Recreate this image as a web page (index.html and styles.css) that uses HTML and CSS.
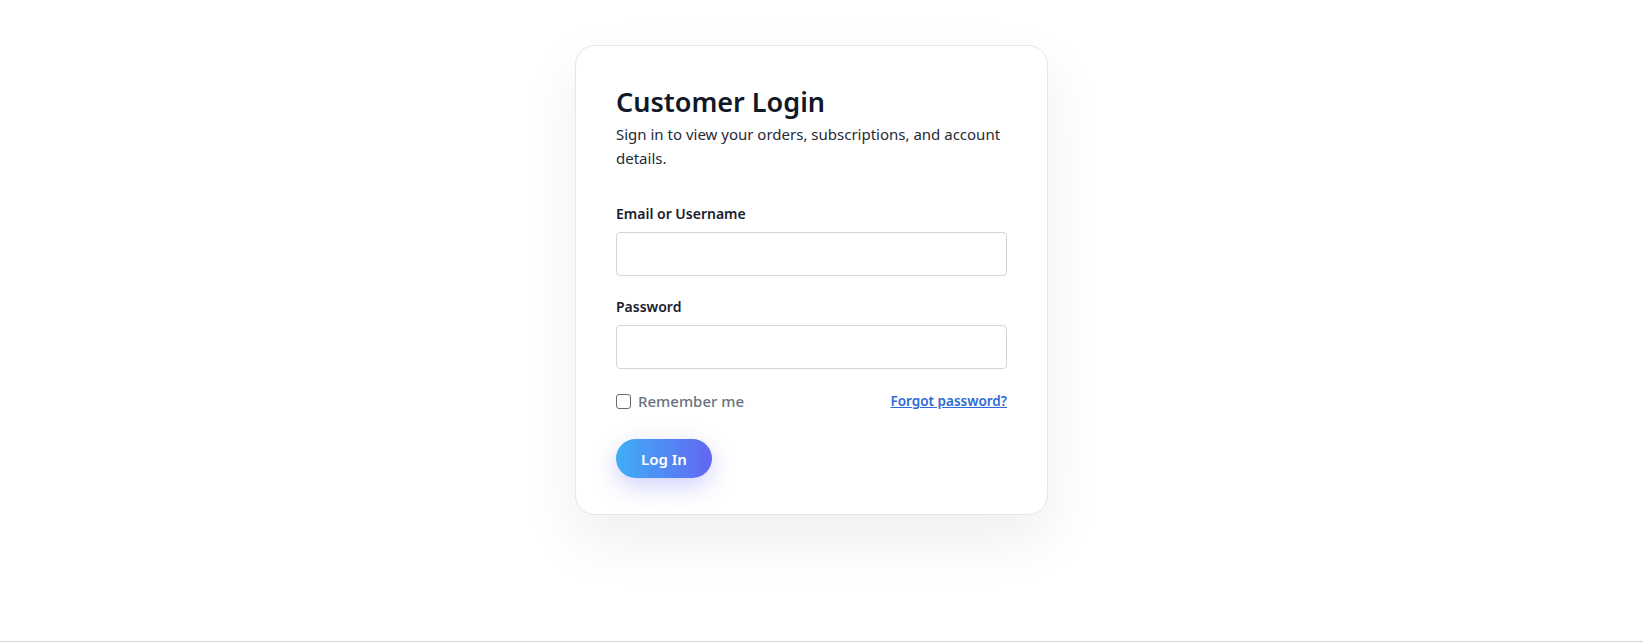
FILE: index.html
```html
<!DOCTYPE html>
<html lang="en">

<head>
  <meta charset="UTF-8">
  <meta name="viewport" content="width=device-width, initial-scale=1.0">
  <title>Customer Login</title>
  <link rel="stylesheet" href="styles.css">
</head>

<body>
  <div class="page">
    <div class="card">
      <h1 class="title">Customer Login</h1>
      <p class="subtitle">Sign in to view your orders, subscriptions, and account details.</p>
      <form class="form">
        <div class="field">
          <label class="label" for="user">Email or Username</label>
          <input class="input" id="user" type="text" />
        </div>
        <div class="field">
          <label class="label" for="pass">Password</label>
          <input class="input" id="pass" type="password" />
        </div>
        <div class="row">
          <label class="remember"><span class="check"></span>Remember me</label>
          <a class="forgot" href="#">Forgot password?</a>
        </div>
        <button class="btn" type="button">Log In</button>
      </form>
    </div>
  </div>
</body>

</html>
```

FILE: styles.css
```css
body {
  margin: 0;
  background: #fff;
  font-family: "Noto Sans", "Open Sans", sans-serif;
  color: #111827;
}

.page {
  box-sizing: border-box;
  height: 642px;
  border-bottom: 1px solid #d6d6d6;
  display: flex;
  justify-content: center;
  align-items: flex-start;
  padding: 45px 20px 0 0;
}

.card {
  box-sizing: border-box;
  width: 473px;
  padding: 36px 40px;
  background: #fff;
  border: 1px solid #e6e6e6;
  border-radius: 20px;
  box-shadow: 0 24px 60px rgba(0, 0, 0, 0.07);
}

.title {
  margin: 0;
  font-size: 27px;
  font-weight: 600;
  line-height: 40px;
  color: #111827;
}

.subtitle {
  margin: 0 0 33px;
  font-size: 15px;
  line-height: 24px;
  color: #1f2937;
}

.field {
  display: flex;
  flex-direction: column;
  margin-bottom: 20px;
}

.label {
  font-size: 14px;
  font-weight: 600;
  line-height: 22px;
  margin-bottom: 7px;
  color: #1a202c;
}

.input {
  box-sizing: border-box;
  height: 44px;
  width: 100%;
  border: 1px solid #d1d5db;
  border-radius: 4px;
  background: #fff;
  font-size: 15px;
}

.row {
  display: flex;
  justify-content: space-between;
  align-items: center;
  margin-top: 22px;
  margin-bottom: 28px;
}

.remember {
  display: flex;
  align-items: center;
  gap: 7px;
  font-size: 15px;
  font-weight: 500;
  color: #6b7280;
}

.check {
  box-sizing: border-box;
  width: 15px;
  height: 15px;
  border: 1.5px solid #6b6b6b;
  border-radius: 3px;
}

.forgot {
  font-size: 13.5px;
  font-weight: 600;
  color: #2f6bd6;
  text-decoration: underline;
}

.btn {
  height: 39px;
  width: 96px;
  border: none;
  border-radius: 20px;
  background: linear-gradient(90deg, #3faef6, #6366f1);
  color: #fff;
  font-family: inherit;
  font-size: 15px;
  font-weight: 600;
  box-shadow: 0 8px 24px rgba(99, 102, 241, 0.3);
}
```
